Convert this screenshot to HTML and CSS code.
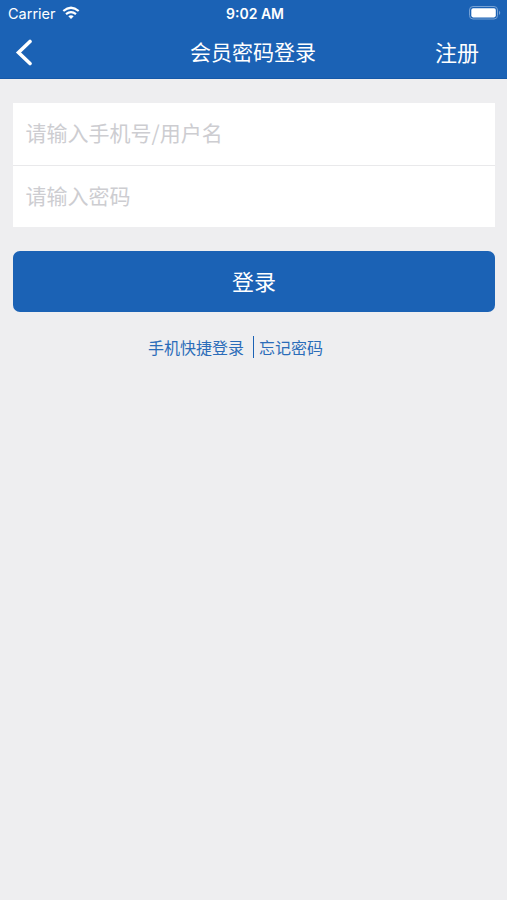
FILE: index.html
```html
<!DOCTYPE html>
<html lang="zh-CN">
<head>
<meta charset="utf-8">
<title>会员密码登录</title>
<link rel="stylesheet" href="styles.css">
</head>
<body>
<header class="header">
  <div class="status">
    <div class="carrier"><span>Carrier</span>
      <svg class="wifi" width="18" height="14" viewBox="0 0 18 14" fill="none" stroke="#fff" stroke-width="2.2"><path d="M1.300 5Q9-1.500 16.700 5M4 8.100Q9 4 14 8.100"/><path d="M6.300 10.300Q9 8 11.700 10.300L9 13Z" fill="#fff" stroke="none"/></svg>
    </div>
    <span class="time">9:02 AM</span>
    <svg class="battery" width="33" height="14" viewBox="0 0 33 14"><rect x=".5" y=".5" width="28" height="12.500" rx="3.500" fill="none" stroke="#76a1d4"/><rect x="2.300" y="2.200" width="24.500" height="9.200" rx="1.800" fill="#fff"/><path d="M30 4.500Q32.500 6.800 30 9Z" fill="#76a1d4"/></svg>
  </div>
  <nav class="nav">
    <a class="back"><svg width="18" height="28" viewBox="0 0 18 28" fill="none" stroke="#fff" stroke-width="3.600" stroke-linecap="round"><path d="M15 2.500L3.500 13.500L15 24.500"/></svg></a>
    <h1 class="title">会员密码登录</h1>
    <a class="register">注册</a>
  </nav>
</header>
<main class="main">
  <div class="fields">
    <div class="field">请输入手机号/用户名</div>
    <div class="field">请输入密码</div>
  </div>
  <button class="login">登录</button>
  <div class="links"><a>手机快捷登录</a><i class="divider"></i><a>忘记密码</a></div>
</main>
</body>
</html>
```
FILE: styles.css
```css
* { box-sizing: border-box; }
body { margin: 0; min-height: 900px; background: #eeeef0; font-family: "Noto Sans CJK SC", sans-serif; }
.header { height: 79px; background: #1b62b5; border-bottom: 1px solid #1558a8; color: #fff; }
.status { height: 27px; display: grid; grid-template-columns: 1fr auto 1fr; align-items: center; padding: 0 5px 0 8px; font: 14.5px/27px Inter, sans-serif; }
.carrier { display: flex; align-items: center; gap: 6px; }
.wifi { margin-bottom: 1px; }
.time { font-weight: 600; font-size: 14px; }
.battery { justify-self: end; margin-bottom: 1px; }
.nav { height: 48px; display: grid; grid-template-columns: 1fr auto 1fr; align-items: center; padding: 0 28px 0 15px; }
.back { display: flex; padding-top: 4px; }
.title { margin: 0 -12px 0 0; font-size: 21px; font-weight: 400; line-height: 30px; }
.register { justify-self: end; font-size: 22px; line-height: 30px; }
.main { padding: 24px 12px 0 13px; }
.fields { background: #fff; }
.field { height: 62px; padding-left: 12.5px; font-size: 21px; line-height: 59px; color: #cdcdd1; }
.field:first-child { height: 63px; border-bottom: 1px solid #e9e9eb; }
.field:last-child { height: 61px; }
.login { display: block; width: 100%; height: 61px; margin-top: 24px; padding: 0 0 2px; border: 0; border-radius: 7px; background: #1b62b5; color: #fff; font: 22px/59px "Noto Sans CJK SC", sans-serif; }
.links { display: flex; align-items: center; height: 24px; margin-top: 23px; padding-left: 135px; color: #2b6cb9; font-size: 16px; line-height: 24px; }
.divider { width: 1px; height: 22px; margin: 0 5px 0 9px; background: #1b62b5; }
```
